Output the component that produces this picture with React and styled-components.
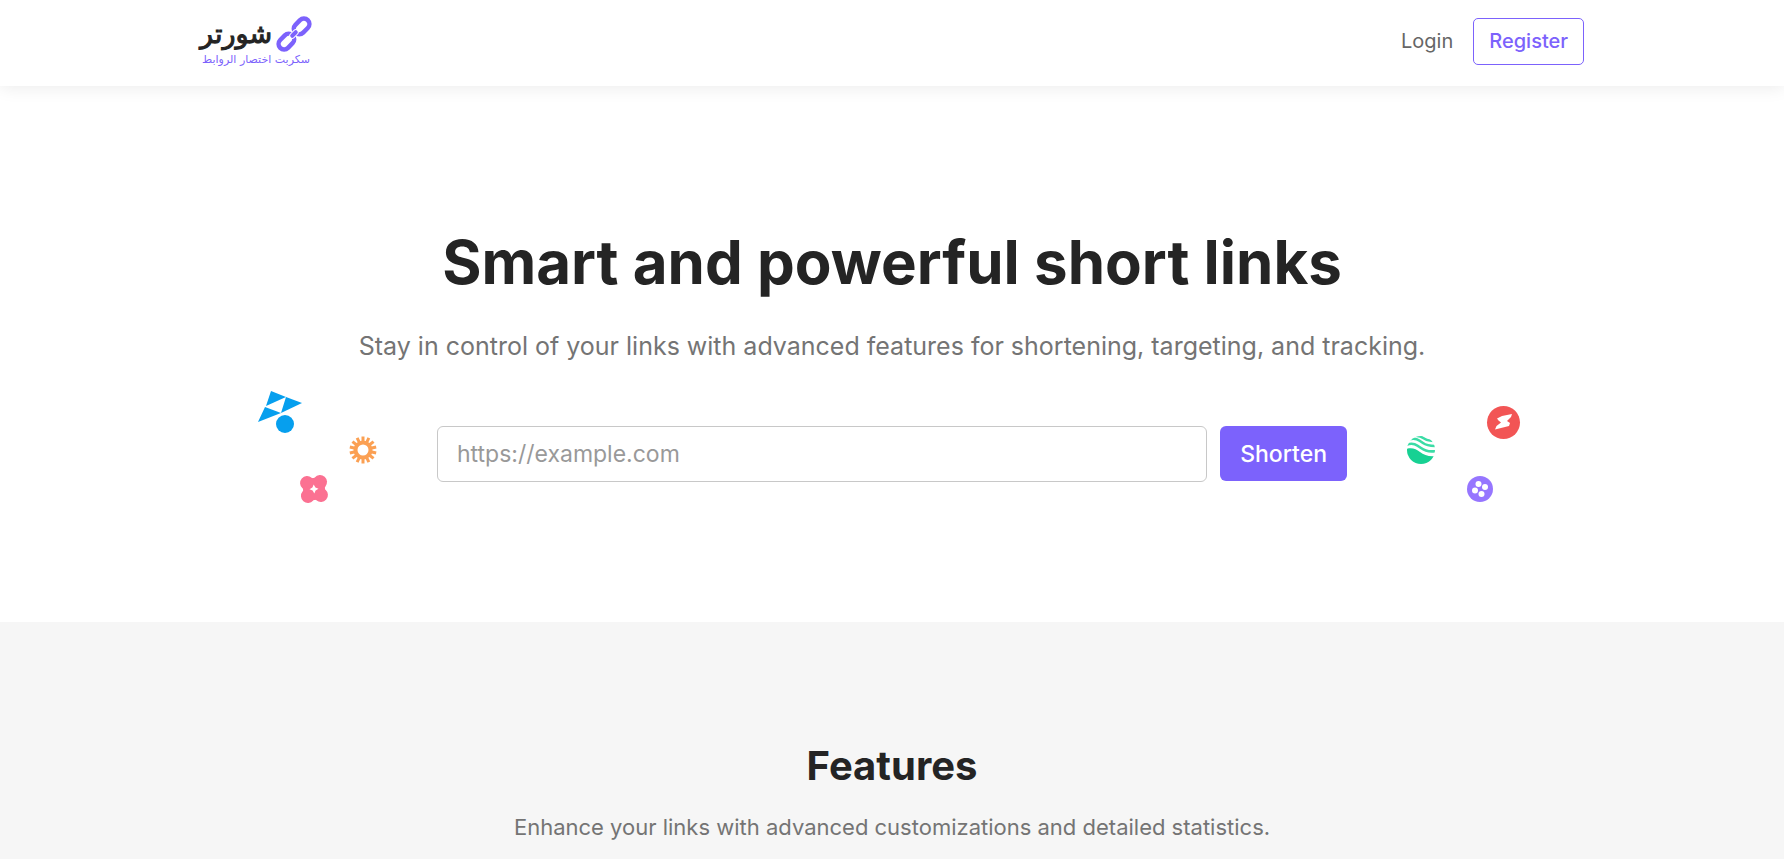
import React, { useState } from 'react'
import styled, { createGlobalStyle } from 'styled-components'

const colors = {
    purple: '#7c62fc',
    dark: '#242424',
    grey: '#747474',
    light: '#f6f6f6',
}

export default function App() {
    const [url, setUrl] = useState('')

    return (
        <Page>
            <GlobalStyle />
            <Header>
                <Container>
                    <Logo href="/">
                        <LogoTop>
                            <ChainIcon />
                            <span>شورتر</span>
                        </LogoTop>
                        <Tagline>سكربت اختصار الروابط</Tagline>
                    </Logo>
                    <Nav>
                        <NavLink href="/login">Login</NavLink>
                        <RegisterLink href="/register">Register</RegisterLink>
                    </Nav>
                </Container>
            </Header>
            <Hero>
                <Title>Smart and powerful short links</Title>
                <Lead>Stay in control of your links with advanced features for shortening, targeting, and tracking.</Lead>
                <ShortenRow>
                    <LeftShapes />
                    <Form onSubmit={e => e.preventDefault()}>
                        <UrlInput
                            type="text"
                            aria-label="URL"
                            placeholder="https://example.com"
                            value={url}
                            onChange={e => setUrl(e.target.value)}
                        />
                        <Button type="submit">Shorten</Button>
                    </Form>
                    <RightShapes />
                </ShortenRow>
            </Hero>
            <Features>
                <SectionTitle>Features</SectionTitle>
                <SectionText>Enhance your links with advanced customizations and detailed statistics.</SectionText>
            </Features>
        </Page>
    )
}

function ChainIcon() {
    return (
        <svg width="36" height="36" viewBox="0 0 36 36" aria-hidden="true">
            <g transform="rotate(-45 18 18)">
                <g fill="none" stroke={colors.purple} strokeWidth="4.5">
                    <rect x="-1.5" y="12.5" width="17.5" height="11" rx="5.5" />
                    <rect x="20" y="12.5" width="17.5" height="11" rx="5.5" />
                </g>
                <rect x="13" y="15.5" width="10" height="5" rx="2.5" fill={colors.purple} stroke="#fff" strokeWidth="1" />
            </g>
        </svg>
    )
}

const rays = Array.from({ length: 14 }, (_, i) => i * 360 / 14)

function LeftShapes() {
    return (
        <svg width="140" height="148" viewBox="0 0 140 148" aria-hidden="true">
            <g fill="#069fee">
                <path d="M21 11L36 17L16 26Z" />
                <path d="M36 17L52 23L31 33Z" />
                <path d="M15 27L31 33L8 42Z" />
                <circle cx="35" cy="44" r="9" />
            </g>
            <g stroke="#fba053" strokeWidth="3">
                {rays.map(a => <path key={a} d="M113 62V56.5" transform={`rotate(${a} 113 70)`} />)}
                <circle cx="113" cy="70" r="7.5" fill="none" strokeWidth="4" />
            </g>
            <g transform="rotate(-4 64 109)">
                <g fill="#fb7192">
                    <circle cx="57.5" cy="102.5" r="7" />
                    <circle cx="70.5" cy="102.5" r="7" />
                    <circle cx="57.5" cy="115.5" r="7" />
                    <circle cx="70.5" cy="115.5" r="7" />
                    <rect x="53" y="98" width="22" height="22" />
                </g>
                <path d="M64 104.500l1.500 3 3 1.500-3 1.500-1.500 3-1.500-3-3-1.500 3-1.500z" fill="#fff" />
            </g>
        </svg>
    )
}

function RightShapes() {
    return (
        <svg width="144" height="148" viewBox="0 0 144 148" aria-hidden="true">
            <defs>
                <clipPath id="globe">
                    <circle cx="31" cy="70" r="14" />
                </clipPath>
            </defs>
            <g clipPath="url(#globe)">
                <path d="M16 69c6-2 10 0 14 3s9 5 16 4v12H16z" fill="#17d193" />
                <g fill="none" stroke="#3bdca6" strokeWidth="2.5">
                    <path d="M16 65c7-3 11 0 15 3s9 4 15 3" />
                    <path d="M18 60c7-3 11 0 15 3s8 3 13 3" />
                    <path d="M24 56c5-1 8 1 11 3s6 2 11 2" />
                </g>
            </g>
            <circle cx="113.500" cy="42.500" r="16.500" fill="#f25555" />
            <path d="M107 38.500l5-2.500 10-2-1 3-4 4 3 2-1 3-6 1.500-8 2 1.500-3.500 4.500-3.500-2.500-2z" fill="#fff" />
            <circle cx="90" cy="109" r="13" fill="#9676ff" />
            <g fill="#fff">
                <circle cx="88.500" cy="104" r="3" />
                <circle cx="95" cy="107" r="3" />
                <circle cx="85" cy="110.500" r="3" />
                <circle cx="91.500" cy="114" r="3" />
            </g>
        </svg>
    )
}

const GlobalStyle = createGlobalStyle`
* {
    box-sizing: border-box;
}
body {
    margin: 0;
    background: #fff;
    color: ${colors.dark};
    font-family: Inter, "Liberation Sans", sans-serif;
}
`

const Page = styled.div`
    display: flex;
    flex-direction: column;
    min-height: 100vh;
`

const Header = styled.header`
    background: #fff;
    box-shadow: 0 2px 16px rgba(0, 0, 0, 0.08);
`

const Container = styled.div`
    display: flex;
    align-items: center;
    justify-content: space-between;
    max-width: 1424px;
    min-height: 86px;
    margin: 0 auto;
    padding: 0 20px 3px;
`

const Logo = styled.a`
    display: flex;
    flex-direction: column;
    align-items: center;
    direction: rtl;
    color: ${colors.dark};
    font-family: "DejaVu Sans", sans-serif;
    text-decoration: none;
`

const LogoTop = styled.span`
    display: flex;
    align-items: center;
    gap: 4px;
    height: 36px;
    font-size: 27px;
    line-height: 36px;
    -webkit-text-stroke: 1px ${colors.dark};
`

const Tagline = styled.span`
    color: ${colors.purple};
    font-size: 11px;
    line-height: 16px;
`

const Nav = styled.nav`
    display: flex;
    align-items: center;
    gap: 20px;
    font-size: 20px;
    line-height: 29px;
`

const NavLink = styled.a`
    color: #666;
    text-decoration: none;
`

const RegisterLink = styled(NavLink)`
    padding: 8px 15px;
    border: 1px solid ${colors.purple};
    border-radius: 5px;
    color: ${colors.purple};
    font-weight: 500;
`

const Hero = styled.main`
    max-width: 1424px;
    width: 100%;
    margin: 0 auto;
    padding: 140px 20px 94px;
    text-align: center;
`

const Title = styled.h1`
    margin: 0 0 29px;
    font-size: 60px;
    font-weight: 700;
    line-height: 72px;
`

const Lead = styled.p`
    margin: 0 0 15px;
    color: ${colors.grey};
    font-size: 25px;
    line-height: 38px;
`

const ShortenRow = styled.div`
    display: flex;
    align-items: center;
    padding: 0 50px;
    & > svg {
        flex: none;
    }
`

const Form = styled.form`
    display: flex;
    flex: 1;
    gap: 13px;
    margin: 0 43px 0 47px;
`

const UrlInput = styled.input`
    flex: 1;
    min-width: 0;
    height: 56px;
    padding: 0 19px;
    border: 1px solid #c8c8c8;
    border-radius: 6px;
    color: ${colors.dark};
    font: inherit;
    font-size: 23px;
    &::placeholder {
        color: #999;
        opacity: 1;
    }
`

const Button = styled.button`
    height: 55px;
    padding: 0 20px;
    border: 0;
    border-radius: 6px;
    background: ${colors.purple};
    color: #fff;
    font: inherit;
    font-size: 23px;
    font-weight: 500;
    cursor: pointer;
`

const Features = styled.section`
    flex: 1;
    padding: 120px 20px 0;
    background: ${colors.light};
    text-align: center;
`

const SectionTitle = styled.h2`
    margin: 0 0 20px;
    font-size: 40px;
    font-weight: 700;
    line-height: 48px;
`

const SectionText = styled.p`
    margin: 0;
    color: ${colors.grey};
    font-size: 22px;
    line-height: 35px;
`
